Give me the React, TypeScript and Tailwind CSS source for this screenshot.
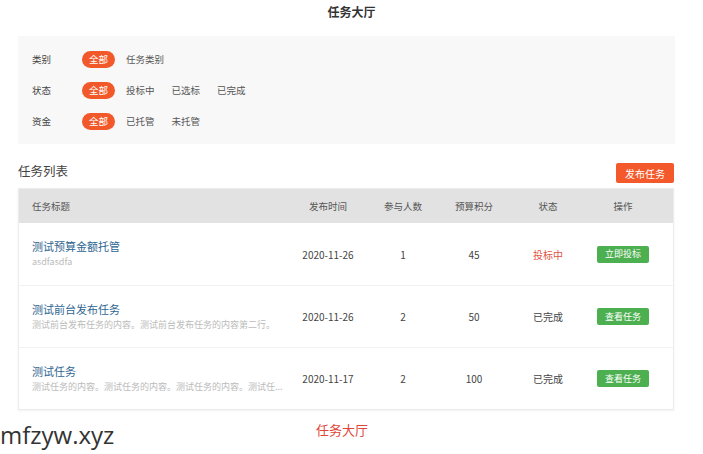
import React from "react";

const filters = [
  { label: "类别", options: ["任务类别"] },
  { label: "状态", options: ["投标中", "已选标", "已完成"] },
  { label: "资金", options: ["已托管", "未托管"] },
];

const tasks = [
  {
    title: "测试预算金额托管",
    desc: "asdfasdfa",
    date: "2020-11-26",
    people: 1,
    budget: 45,
    status: "投标中",
    action: "立即投标",
  },
  {
    title: "测试前台发布任务",
    desc: "测试前台发布任务的内容。测试前台发布任务的内容第二行。",
    date: "2020-11-26",
    people: 2,
    budget: 50,
    status: "已完成",
    action: "查看任务",
  },
  {
    title: "测试任务",
    desc: "测试任务的内容。测试任务的内容。测试任务的内容。测试任...",
    date: "2020-11-17",
    people: 2,
    budget: 100,
    status: "已完成",
    action: "查看任务",
  },
];

const cols = "grid grid-cols-[272px_74px_76px_66px_82px_68px]";

export default function App() {
  return (
    <div className="w-[703px] h-[454px] overflow-hidden bg-white font-['Noto_Sans_CJK_SC','Open_Sans',sans-serif] text-[#333]">
      <div className="pt-[3px] text-center text-[12px] font-bold leading-[18px] text-[#333]">任务大厅</div>

      <div className="ml-[18px] w-[657px]">
        {/* filter panel */}
        <div className="mt-[15px] bg-[#f8f8f8] px-[14px] pt-[15px] pb-[14px] flex flex-col gap-[14px]">
          {filters.map((f) => (
            <div key={f.label} className="flex items-center h-[17px] text-[9.5px]">
              <span className="w-[50px] text-[#444]">{f.label}</span>
              <span className="w-[33px] h-[17px] rounded-full bg-[#f2592a] text-white flex items-center justify-center">全部</span>
              <div className="flex ml-[11px] gap-[17px] text-[#555]">
                {f.options.map((o) => (
                  <span key={o}>{o}</span>
                ))}
              </div>
            </div>
          ))}
        </div>

        {/* list header */}
        <div className="mt-[19px] flex items-center justify-between h-[20px]">
          <span className="text-[12.5px] leading-[16px] -mt-[4px] text-[#444]">任务列表</span>
          <button className="mr-[1px] w-[58px] h-[20px] rounded-[2px] bg-[#f4592b] text-white text-[10px] flex items-center justify-center">发布任务</button>
        </div>

        {/* table */}
        <div className="mt-[5px] w-[656px] border border-[#ececec] shadow-[0_1px_2px_rgba(0,0,0,0.06)]">
          <div className={`${cols} h-[34px] bg-[#e2e2e2] items-center text-[9.5px] text-[#555]`}>
            <span className="pl-[13px]">任务标题</span>
            <span className="text-center">发布时间</span>
            <span className="text-center">参与人数</span>
            <span className="text-center">预算积分</span>
            <span className="text-center">状态</span>
            <span className="text-center">操作</span>
          </div>
          {tasks.map((t, i) => (
            <div
              key={t.title}
              className={`${cols} h-[62px] items-center text-[10px] text-[#444] ${i > 0 ? "border-t border-[#f2f2f2]" : ""}`}
            >
              <div className="pl-[13px] flex flex-col -mt-[2px]">
                <span className="text-[11px] leading-[16px] text-[#2f6691]">{t.title}</span>
                <span className="mt-[1px] text-[9px] leading-[13px] text-[#bbbbbb] whitespace-nowrap">{t.desc}</span>
              </div>
              <span className="text-center">{t.date}</span>
              <span className="text-center">{t.people}</span>
              <span className="text-center">{t.budget}</span>
              <span className={`text-center ${t.status === "投标中" ? "text-[#e0533f]" : "text-[#444]"}`}>{t.status}</span>
              <div className="flex justify-center">
                <span className="w-[52px] h-[17px] rounded-[2px] bg-[#4caf50] text-white text-[9px] flex items-center justify-center">{t.action}</span>
              </div>
            </div>
          ))}
        </div>
      </div>

      {/* footer */}
      <div className="relative h-[44px]">
        <span className="absolute left-0 top-[11px] text-[24px] leading-[28px] text-[#333] font-['Open_Sans',sans-serif]">mfzyw.xyz</span>
        <span className="absolute left-[316px] top-[10px] text-[13px] text-[#e0463a]">任务大厅</span>
      </div>
    </div>
  );
}
